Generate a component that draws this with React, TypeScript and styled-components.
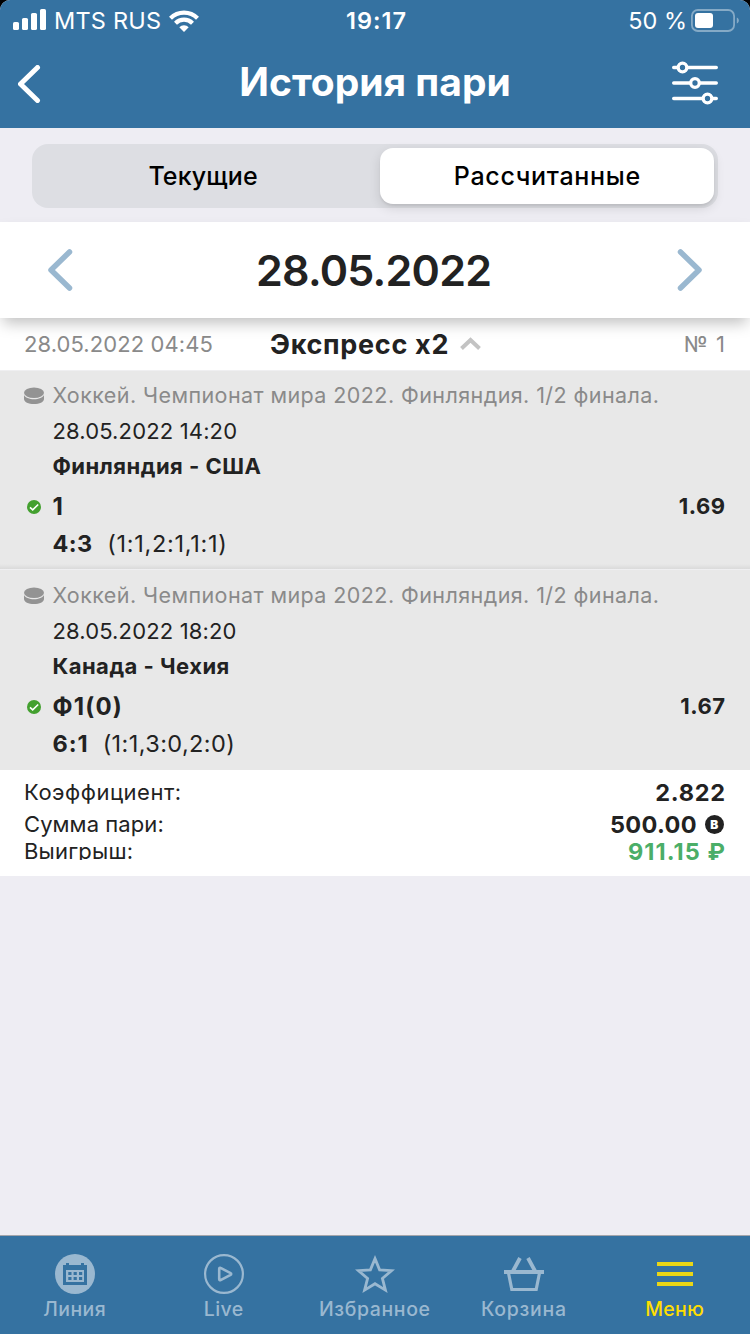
import React from "react";
import styled, { createGlobalStyle } from "styled-components";

const blue = "#3572a1";
const paleBlue = "#9ab8d0";
const ink = "#222222";
const gray = "#8a8a8a";

const GlobalStyle = createGlobalStyle`
  * { box-sizing: border-box; }
  html, body { margin: 0; background: #000; }
  body { font-family: Inter, "Noto Sans", sans-serif; color: ${ink}; }
`;

const Screen = styled.div`
  width: 750px;
  height: 1334px;
  display: flex;
  flex-direction: column;
  background: #eeedf3;
  border-radius: 10px 10px 0 0;
  overflow: hidden;
`;

/* The negative margin takes back the tracking after the last letter. */
const Text = styled.span<{ $size: number; $weight?: number; $track?: number; $color?: string }>`
  font-size: ${(p) => p.$size}px;
  font-weight: ${(p) => p.$weight ?? 400};
  letter-spacing: ${(p) => p.$track ?? 0}px;
  margin-right: ${(p) => -(p.$track ?? 0)}px;
  color: ${(p) => p.$color ?? ink};
  white-space: pre;
`;

const StatusBar = styled.div`
  height: 40px;
  flex: none;
  display: grid;
  grid-template-columns: 1fr auto 1fr;
  align-items: center;
  padding: 0 11px 0 13px;
  background: ${blue};
  line-height: 41px;
`;

const StatusGroup = styled.div<{ $end?: boolean }>`
  display: flex;
  align-items: center;
  gap: ${(p) => (p.$end ? 3 : 8)}px;
  justify-content: ${(p) => (p.$end ? "flex-end" : "flex-start")};
`;

const NavBar = styled.header`
  height: 88px;
  flex: none;
  display: grid;
  grid-template-columns: 60px 1fr 60px;
  align-items: center;
  padding: 0 18px 5px;
  background: ${blue};
  text-align: center;
`;

const NavButton = styled.button<{ $end?: boolean }>`
  border: 0;
  padding: ${(p) => (p.$end ? "3px 14px 0 0" : "4px 0 0")};
  background: none;
  display: flex;
  justify-content: ${(p) => (p.$end ? "flex-end" : "flex-start")};
`;

const SegmentArea = styled.div`
  height: 94px;
  flex: none;
  padding: 16px 32px 14px;
`;

const Segmented = styled.div`
  height: 64px;
  display: grid;
  grid-template-columns: 1fr 334px;
  column-gap: 10px;
  padding: 4px;
  border-radius: 16px;
  background: #dddee3;
`;

const Segment = styled.button<{ $active?: boolean }>`
  border: 0;
  padding: 0;
  border-radius: 13px;
  font-family: inherit;
  background: ${(p) => (p.$active ? "#fff" : "transparent")};
  box-shadow: ${(p) => (p.$active ? "0 4px 12px rgba(0,0,0,.12), 0 2px 2px rgba(0,0,0,.06)" : "none")};
`;

const DateBar = styled.div`
  position: relative;
  z-index: 1;
  height: 96px;
  flex: none;
  display: flex;
  align-items: center;
  justify-content: space-between;
  padding: 0 47px;
  background: #fff;
  box-shadow: 0 8px 14px -3px rgba(0, 0, 0, 0.25);
`;

const CurrentDate = styled(Text)`
  padding-right: 2px;
`;

const BetHeader = styled.div`
  height: 52px;
  flex: none;
  display: grid;
  grid-template-columns: 246px 1fr auto;
  align-items: center;
  padding: 0 25px 0 24px;
  background: #fff;
`;

const BetKind = styled.div`
  display: flex;
  align-items: center;
  gap: 11px;
`;

const Event = styled.section<{ $followed?: boolean }>`
  height: ${(p) => (p.$followed ? 199 : 201)}px;
  flex: none;
  display: grid;
  grid-template-columns: 28.4px 1fr auto;
  grid-template-rows: 34px 38px 32px 49px 25px;
  align-items: center;
  padding: ${(p) => (p.$followed ? 7 : 8)}px 25px 0 24px;
  border-top: 1px solid #efeff1;
  background: ${(p) =>
    p.$followed ? "linear-gradient(#e8e8e8 193px, #dadada 198px)" : "#e8e8e8"};
`;

const Line = styled.div<{ $wide?: boolean }>`
  grid-column: 2 / ${(p) => (p.$wide ? "4" : "3")};
  display: flex;
  align-items: center;
`;

const Odds = styled(Text)`
  padding-bottom: 1px;
`;

const Periods = styled(Text)`
  margin-left: 15px;
`;

const IconCell = styled.div<{ $indent?: number }>`
  grid-column: 1;
  display: flex;
  padding-left: ${(p) => p.$indent ?? 0}px;
`;

const Summary = styled.div`
  height: 106px;
  flex: none;
  padding: 7px 25px 0 24px;
  background: #fff;
`;

const SummaryRow = styled.div<{ $h: number; $line: number }>`
  height: ${(p) => p.$h}px;
  line-height: ${(p) => p.$line}px;
  overflow: hidden;
  display: flex;
  justify-content: space-between;
`;

const Amount = styled.div`
  display: flex;
  align-items: center;
  gap: 8px;
  padding-right: 1px;
`;

const Coin = styled.span`
  width: 19.4px;
  height: 19.4px;
  border-radius: 50%;
  background: ${ink};
  color: #fff;
  font-size: 12px;
  font-weight: 900;
  line-height: 19.4px;
  text-align: center;
`;

const TabBar = styled.nav`
  height: 99px;
  flex: none;
  margin-top: auto;
  display: grid;
  grid-template-columns: repeat(5, 1fr);
  border-top: 1px solid #a3a5ab;
  background: ${blue};
`;

const Tab = styled.div<{ $inset?: number }>`
  display: flex;
  flex-direction: column;
  align-items: center;
  padding: 18px ${(p) => p.$inset ?? 0}px 0 0;
  line-height: 30px;
`;

const TabLabel = styled(Text)`
  padding-right: 1px;
`;

type ChevronProps = { w: number; h: number; d: string; sw: number; color: string; cap?: "round" | "butt" };

const Chevron = ({ w, h, d, sw, color, cap = "round" }: ChevronProps) => (
  <svg
    width={w}
    height={h}
    viewBox={`0 0 ${w} ${h}`}
    fill="none"
    stroke={color}
    strokeWidth={sw}
    strokeLinecap={cap}
    strokeLinejoin={cap === "round" ? "round" : "miter"}
  >
    <path d={d} />
  </svg>
);

const SignalIcon = () => (
  <svg width="33" height="23" viewBox="0 0 33 23" fill="#fff">
    <rect x="0" y="13" width="6" height="8" rx="1.6" />
    <rect x="9" y="9" width="6" height="12" rx="1.6" />
    <rect x="18" y="4" width="6" height="17" rx="1.6" />
    <rect x="27" y="0" width="6" height="21" rx="1.6" />
  </svg>
);

const WifiIcon = () => (
  <svg width="30" height="22" viewBox="0 0 30 22">
    <g fill="none" stroke="#fff" strokeWidth="4.200">
      <path d="M1.5 8.2a19.2 19.2 0 0 1 27 0" />
      <path d="M6.5 13.2a12.1 12.1 0 0 1 17 0" />
    </g>
    <path fill="#fff" d="M15 22l-4.700-4.700a6.650 6.650 0 0 1 9.400 0z" />
  </svg>
);

const BatteryIcon = () => (
  <svg width="49" height="24" viewBox="0 0 49 24">
    <rect x="1.900" y="1" width="42.200" height="21" rx="6" fill="none" stroke="#fff" strokeOpacity=".4" strokeWidth="1.800" />
    <rect x="5" y="4" width="18" height="15" rx="3" fill="#fff" />
    <path d="M46.800 8.500c1.400.5 2 1.700 2 3s-.6 2.500-2 3z" fill="#fff" fillOpacity=".4" />
  </svg>
);

const FilterIcon = () => (
  <svg width="46" height="44" viewBox="0 0 46 44" fill={blue} stroke="#fff" strokeLinecap="round">
    <path strokeWidth="3.400" d="M1.700 6.500h42.600M1.700 22h42.600M1.700 37.500h42.600" />
    <g strokeWidth="3.300">
      <circle cx="10.500" cy="6.500" r="4.300" />
      <circle cx="23" cy="22" r="4.300" />
      <circle cx="35.500" cy="37.500" r="4.300" />
    </g>
  </svg>
);

const PuckIcon = () => (
  <svg width="20" height="17" viewBox="0 0 20 17" fill="#939393">
    <ellipse cx="10" cy="5.800" rx="10" ry="5.200" />
    <path d="M0 8c1.200 2.700 5.200 4.200 10 4.200s8.800-1.500 10-4.200v3.900c0 3-4.500 5.100-10 5.100S0 14.900 0 11.900z" />
  </svg>
);

const WonIcon = () => (
  <svg width="14" height="14" viewBox="0 0 14 14">
    <circle cx="7" cy="7" r="7" fill="#43a02f" />
    <path d="M3 7.300l2.700 2.600 5.500-5.400" fill="none" stroke="#fff" strokeWidth="1.600" />
  </svg>
);

const LineIcon = () => (
  <svg width="40" height="40" viewBox="0 0 40 40">
    <circle cx="20" cy="20" r="20" fill={paleBlue} />
    <path fill={blue} d="M8 11h3V9h3v2h12V9h3v2h3v20H8z" />
    <path fill={paleBlue} d="M11 16h18v12H11z" />
    <path
      fill={blue}
      d="M13.300 18h3.200v3h-3.200zM18.600 18h3.200v3h-3.200zM24 18h3.200v3H24zM13.300 23h3.200v3h-3.200zM18.600 23h3.200v3h-3.200zM24 23h3.200v3H24z"
    />
  </svg>
);

const LiveIcon = () => (
  <svg width="40" height="40" viewBox="0 0 40 40" fill="none" stroke={paleBlue}>
    <circle cx="20" cy="20" r="18.900" strokeWidth="2.200" />
    <path
      d="M15.200 14.700v10.600c0 .9.700 1.200 1.400.8l10-5.200c.8-.4.800-1.300 0-1.700l-10-5.300c-.7-.4-1.400 0-1.400.8z"
      strokeWidth="2.600"
    />
  </svg>
);

const StarIcon = () => (
  <svg width="40" height="40" viewBox="0 0 40 40" fill="none" stroke={paleBlue} strokeWidth="2.800">
    <path d="M20 4.600l4.600 11.200 12 .8-9.200 7.800 3 11.700L20 29.700 9.600 36.100l3-11.700-9.200-7.800 12-.8z" />
  </svg>
);

const BasketIcon = () => (
  <svg width="40" height="40" viewBox="0 0 40 40" fill="none" stroke={paleBlue}>
    <path d="M0 18h40" strokeWidth="4" />
    <path d="M4.500 19l3.300 16.500h24.400L35.500 19" strokeWidth="3.200" />
    <path d="M8.500 18l7.500-14M31.500 18L24 4" strokeWidth="3.800" />
  </svg>
);

const MenuIcon = () => (
  <svg width="40" height="40" viewBox="0 0 40 40" stroke="#ead616" strokeWidth="4">
    <path d="M2 10h36M2 20h36M2 30h36" />
  </svg>
);

const events = [
  {
    time: "28.05.2022 14:20",
    teams: "Финляндия - США",
    pick: "1",
    odds: "1.69",
    score: "4:3",
    scoreTrack: 0.4,
    periods: "(1:1,2:1,1:1)",
    periodsTrack: 0.72,
  },
  {
    time: "28.05.2022 18:20",
    teams: "Канада - Чехия",
    pick: "Ф1(0)",
    odds: "1.67",
    score: "6:1",
    scoreTrack: 1,
    periods: "(1:1,3:0,2:0)",
    periodsTrack: 0.4,
  },
];

const tabs = [
  { label: "Линия", icon: <LineIcon />, track: 0.4 },
  { label: "Live", icon: <LiveIcon />, track: 0.4, inset: 2 },
  { label: "Избранное", icon: <StarIcon />, track: 0.6 },
  { label: "Корзина", icon: <BasketIcon />, track: 0.7, inset: 2 },
  { label: "Меню", icon: <MenuIcon />, track: 0.3, active: true },
];

export default function App() {
  return (
    <>
      <GlobalStyle />
      <Screen>
        <StatusBar>
          <StatusGroup>
            <SignalIcon />
            <Text $size={23.5} $color="#fff" $track={0.2}>MTS RUS</Text>
            <WifiIcon />
          </StatusGroup>
          <Text $size={23.5} $weight={600} $color="#fff" $track={1}>19:17</Text>
          <StatusGroup $end>
            <Text $size={23.5} $color="#fff">50 %</Text>
            <BatteryIcon />
          </StatusGroup>
        </StatusBar>
        <NavBar>
          <NavButton><Chevron w={24} h={38} d="M19.500 2.500L2.500 19l17 16.500" sw={5} color="#fff" /></NavButton>
          <Text $size={39} $weight={700} $color="#fff">История пари</Text>
          <NavButton $end><FilterIcon /></NavButton>
        </NavBar>
        <SegmentArea>
          <Segmented>
            <Segment><Text $size={25} $weight={500} $color="#000" $track={0.13}>Текущие</Text></Segment>
            <Segment $active><Text $size={25} $weight={500} $color="#000" $track={0.7}>Рассчитанные</Text></Segment>
          </Segmented>
        </SegmentArea>
        <DateBar>
          <Chevron w={26} h={42} d="M22.500 3L4 21l18.500 18" sw={5.5} color={paleBlue} />
          <CurrentDate $size={43} $weight={600} $track={-0.75}>28.05.2022</CurrentDate>
          <Chevron w={26} h={42} d="M3.500 3L22 21L3.500 39" sw={5.5} color={paleBlue} />
        </DateBar>
        <BetHeader>
          <Text $size={22} $color={gray} $track={0.08}>28.05.2022 04:45</Text>
          <BetKind>
            <Text $size={27} $weight={700} $track={0.7}>Экспресс x2</Text>
            <Chevron w={21} h={14} d="M1.500 11.500l9-8.500 9 8.500" sw={4} color="#c3c3c3" cap="butt" />
          </BetKind>
          <Text $size={22} $color={gray} $track={1.1}>№ 1</Text>
        </BetHeader>
        {events.map((e, i) => (
          <Event key={e.time} $followed={i < events.length - 1}>
            <IconCell><PuckIcon /></IconCell>
            <Line $wide>
              <Text $size={21.5} $track={0.42} $color={gray}>Хоккей. Чемпионат мира 2022. Финляндия. 1/2 финала.</Text>
            </Line>
            <Line $wide><Text $size={22} $track={0.15}>{e.time}</Text></Line>
            <Line $wide><Text $size={22} $weight={700} $track={0.48}>{e.teams}</Text></Line>
            <IconCell $indent={3}><WonIcon /></IconCell>
            <Line><Text $size={24} $weight={700} $track={1.2}>{e.pick}</Text></Line>
            <Odds $size={22} $weight={700} $track={0.5}>{e.odds}</Odds>
            <Line $wide>
              <Text $size={23.5} $weight={700} $track={e.scoreTrack}>{e.score}</Text>
              <Periods $size={23.5} $track={e.periodsTrack}>{e.periods}</Periods>
            </Line>
          </Event>
        ))}
        <Summary>
          <SummaryRow $h={31} $line={31}>
            <Text $size={22} $track={0.5}>Коэффициент:</Text>
            <Text $size={23.5} $weight={700} $track={0.7}>2.822</Text>
          </SummaryRow>
          <SummaryRow $h={33} $line={33}>
            <Text $size={22} $track={0.08}>Сумма пари:</Text>
            <Amount>
              <Text $size={23.5} $weight={700} $track={0.35}>500.00</Text>
              <Coin>B</Coin>
            </Amount>
          </SummaryRow>
          <SummaryRow $h={19} $line={21}>
            <Text $size={22} $track={0.2}>Выигрыш:</Text>
            <Text $size={23.5} $weight={700} $track={1.1} $color="#4bae68">911.15 ₽</Text>
          </SummaryRow>
        </Summary>
        <TabBar>
          {tabs.map((t) => (
            <Tab key={t.label} $inset={t.inset}>
              {t.icon}
              <TabLabel $size={19.5} $weight={500} $track={t.track} $color={t.active ? "#ffde00" : paleBlue}>
                {t.label}
              </TabLabel>
            </Tab>
          ))}
        </TabBar>
      </Screen>
    </>
  );
}
